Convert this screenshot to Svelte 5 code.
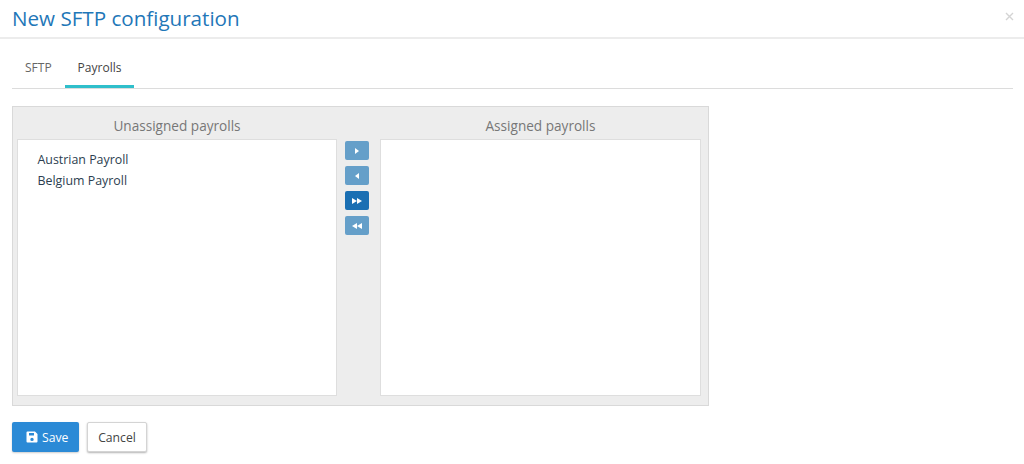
<script>
  let tabs = ['SFTP', 'Payrolls'];
  let activeTab = 'Payrolls';
  let unassigned = ['Austrian Payroll', 'Belgium Payroll'];
  let moves = [
    { id: 'one-right', points: ['4,3 8,6 4,9'] },
    { id: 'one-left', points: ['8,3 4,6 8,9'] },
    { id: 'all-right', points: ['1,3 6,6 1,9', '6,3 11,6 6,9'], primary: true },
    { id: 'all-left', points: ['6,3 1,6 6,9', '11,3 6,6 11,9'] }
  ];
</script>

<div class="modal">
  <header>
    <h1>New SFTP configuration</h1>
    <button class="close" aria-label="Close">
      <svg width="9" height="9" viewBox="0 0 9 9"><path d="M1 1l7 7M8 1l-7 7" /></svg>
    </button>
  </header>

  <div class="body">
    <nav>
      {#each tabs as tab}
        <span class="tab" class:active={tab === activeTab}>{tab}</span>
      {/each}
    </nav>

    <section class="picker">
      <div class="col">
        <h2>Unassigned payrolls</h2>
        <ul class="list">
          {#each unassigned as item}
            <li>{item}</li>
          {/each}
        </ul>
      </div>
      <div class="moves">
        {#each moves as move}
          <button class="move" class:primary={move.primary} aria-label={move.id}>
            <svg width="12" height="12" viewBox="0 0 12 12">
              {#each move.points as p}<polygon points={p} />{/each}
            </svg>
          </button>
        {/each}
      </div>
      <div class="col">
        <h2>Assigned payrolls</h2>
        <ul class="list"></ul>
      </div>
    </section>

    <div class="actions">
      <button class="save">
        <svg width="12" height="12" viewBox="0 0 12 12">
          <path fill-rule="evenodd" d="M1.5 0.5H9L11.5 3V10.5a1 1 0 0 1-1 1h-9a1 1 0 0 1-1-1V1.5a1 1 0 0 1 1-1zM3 2v2.5h5V2zM6 6.7a1.7 1.7 0 1 0 0 3.4a1.7 1.7 0 0 0 0-3.4z" />
        </svg>
        Save
      </button>
      <button class="cancel">Cancel</button>
    </div>
  </div>
</div>

<style>
  :global(body) {
    margin: 0;
    background: #fff;
  }

  .modal {
    width: 1024px;
    height: 464px;
    overflow: hidden;
    font-family: "Open Sans", sans-serif;
    color: #2c3e50;
  }

  header {
    display: flex;
    justify-content: space-between;
    align-items: center;
    height: 37px;
    box-sizing: content-box;
    padding: 0 10px 0 12px;
    border-bottom: 2px solid #ececec;
  }

  h1 {
    margin: 0 0 2px;
    font-size: 20.6px;
    font-weight: 400;
    color: #1f77b8;
  }

  .close {
    border: 0;
    background: none;
    padding: 0;
    display: flex;
    margin-top: -4px;
  }

  .close path {
    stroke: #d4d4d4;
    stroke-width: 1.4;
    fill: none;
  }

  .body {
    padding: 0 11px 0 12px;
  }

  nav {
    display: flex;
    height: 49px;
    border-bottom: 1px solid #dcdcdc;
  }

  .tab {
    padding: 0 13px;
    height: 49px;
    line-height: 57px;
    box-sizing: border-box;
    font-size: 12px;
    color: #666;
  }

  .tab.active {
    color: #444;
    border-bottom: 3px solid #2fbfcb;
  }

  .picker {
    display: flex;
    margin-top: 17px;
    width: 697px;
    height: 300px;
    box-sizing: border-box;
    padding: 0 7px 9px 4px;
    background: #ededed;
    border: 1px solid #d9d9d9;
  }

  .col {
    display: flex;
    flex-direction: column;
  }

  .col:first-child {
    width: 320px;
  }

  .col:last-child {
    width: 321px;
  }

  h2 {
    margin: 0;
    height: 32px;
    line-height: 37px;
    text-align: center;
    font-size: 13.6px;
    font-weight: 400;
    color: #777;
  }

  .list {
    flex: 1;
    margin: 0;
    padding: 10px 19.5px;
    list-style: none;
    background: #fff;
    border: 1px solid #dedede;
    font-size: 12.4px;
    line-height: 20.6px;
    color: #2c3e50;
  }

  .moves {
    width: 43px;
    box-sizing: border-box;
    display: flex;
    flex-direction: column;
    align-items: flex-start;
    gap: 6px;
    padding: 34px 0 0 8px;
  }

  .move {
    width: 24px;
    height: 19px;
    padding: 0;
    border: 0;
    border-radius: 2px;
    background: #659fc9;
    display: flex;
    align-items: center;
    justify-content: center;
  }

  .move.primary {
    background: #1a6fb3;
  }

  .move svg {
    fill: #fff;
  }

  .actions {
    display: flex;
    gap: 8px;
    margin-top: 16px;
  }

  .actions button {
    height: 30px;
    font-family: inherit;
    font-size: 12.2px;
    border-radius: 2px;
    padding: 0;
  }

  .actions .save {
    width: 67px;
    display: flex;
    align-items: center;
    padding-left: 14px;
    gap: 4px;
    border: 0;
    background: #2b8ad6;
    color: #fff;
    box-shadow: 0 1px 2px rgba(0, 0, 0, 0.2);
  }

  .save svg {
    fill: #fff;
  }

  .cancel {
    width: 60px;
    background: #fff;
    color: #444;
    border: 1px solid #d4d4d4;
    box-shadow: 0 1px 2px rgba(0, 0, 0, 0.3);
  }
</style>
